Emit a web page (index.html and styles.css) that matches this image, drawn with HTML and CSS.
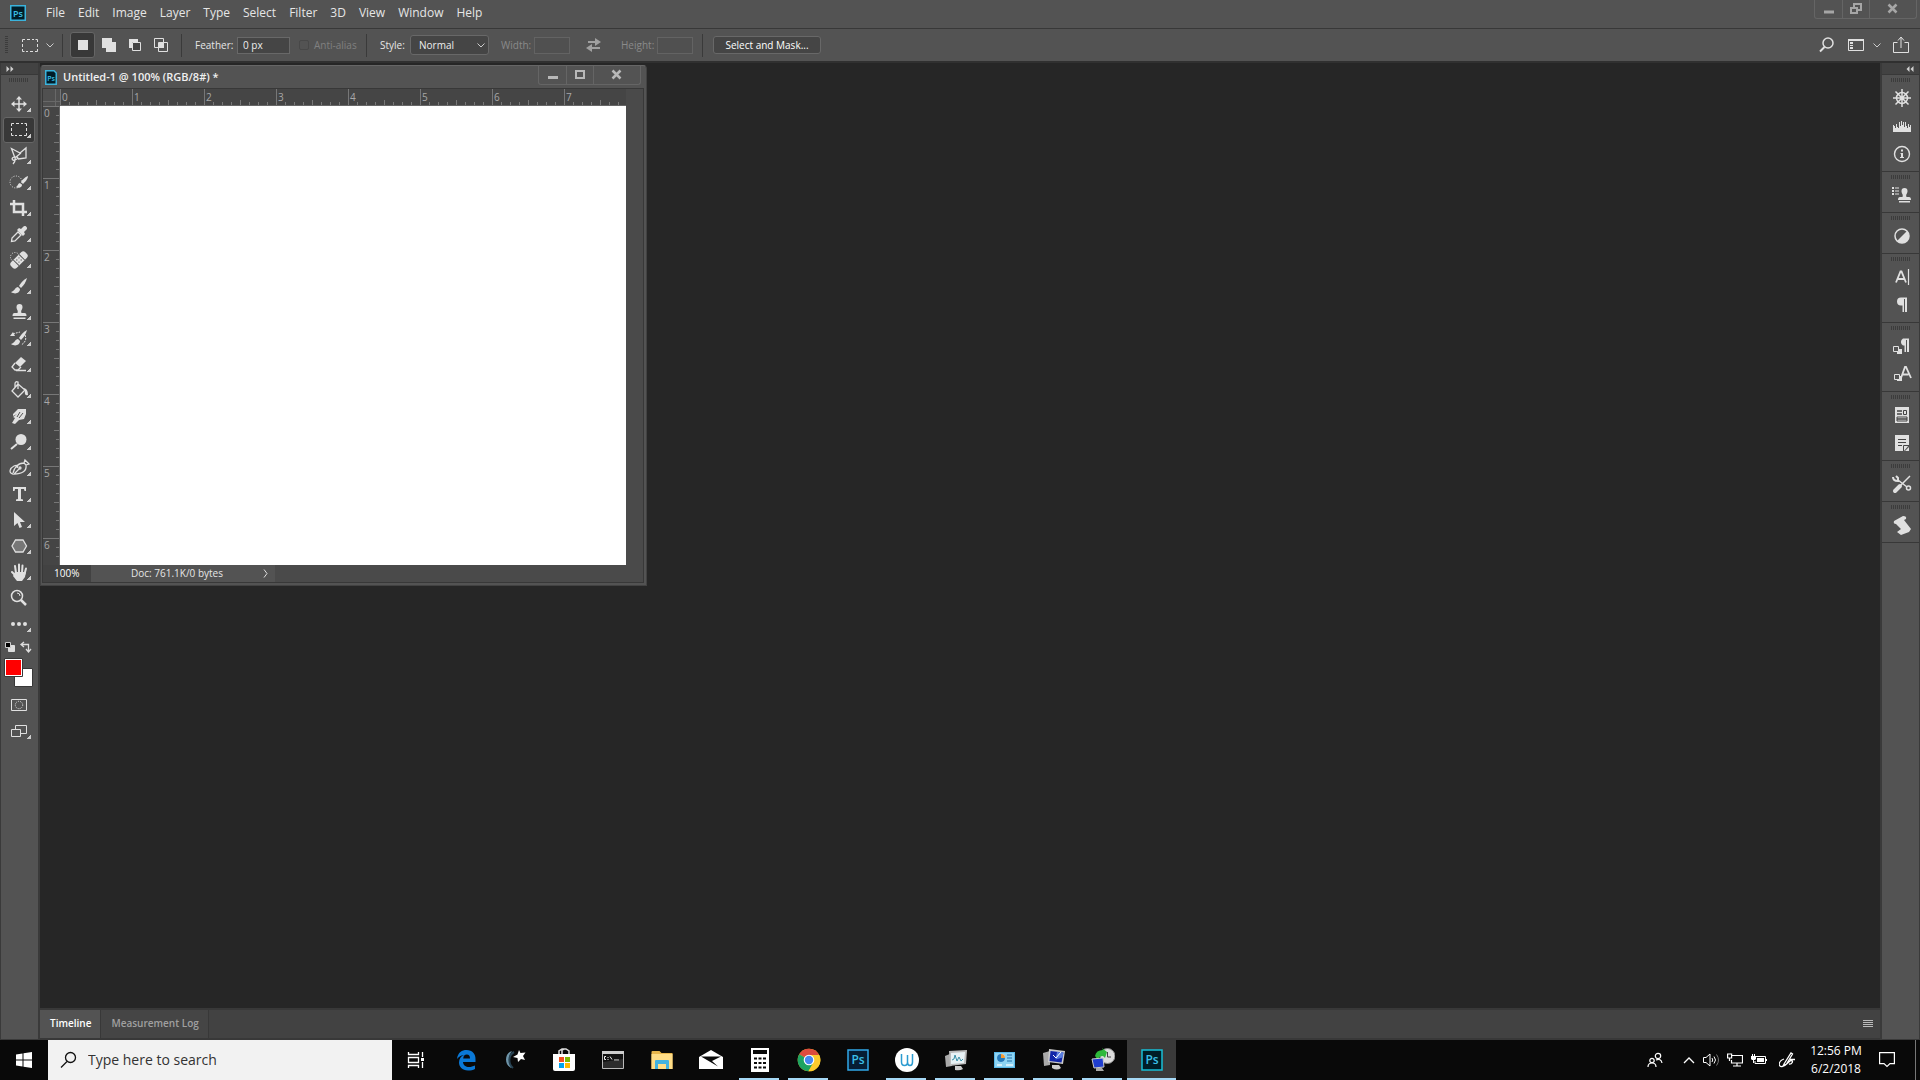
FILE: index.html
```
<!DOCTYPE html>
<html lang="en">
<head>
<meta charset="utf-8">
<title>Untitled-1 @ 100% (RGB/8#)</title>
<link rel="stylesheet" href="styles.css">
</head>
<body>
<div class="desktop">
  <header class="menubar">
    <svg class="ps-logo" width="16" height="16" viewBox="0 0 16 16"><rect x=".75" y=".75" width="14.5" height="14.5" fill="#001d29" stroke="#3bb3dc" stroke-width="1.5"/><text x="8" y="11.5" text-anchor="middle" class="ps-text ps-small">Ps</text></svg>
    <nav class="menus">
      <button>File</button><button>Edit</button><button>Image</button><button>Layer</button><button>Type</button><button>Select</button><button>Filter</button><button>3D</button><button>View</button><button>Window</button><button>Help</button>
    </nav>
    <div class="window-controls">
      <button aria-label="Minimize"><svg width="12" height="12"><path d="M1 9h10" stroke="#a6a6a6" stroke-width="3"/></svg></button>
      <button aria-label="Restore"><svg width="14" height="12" fill="none" stroke="#a6a6a6" stroke-width="2"><path d="M5 4V1h7v6H9M2 5h6v5H2z"/></svg></button>
      <button aria-label="Close"><svg width="12" height="12"><path d="M1.500 1.500l8 8M9.500 1.500l-8 8" stroke="#a6a6a6" stroke-width="2.500"/></svg></button>
    </div>
  </header>

  <div class="options">
    <span class="vgrip"></span>
    <button class="preset" aria-label="Marquee presets"><svg width="18" height="14" fill="none" stroke="#ddd"><path d="M1.500 4V1.500H4M6 1.500h3M11 1.500h2M14.500 1.500h2V4M16.500 6v3M16.500 11v2.500H14M12 13.500H9M7 13.500H5M3.500 13.500h-2V11M1.500 9V6"/></svg><svg width="8" height="5"><path d="M.5.500L4 4 7.500.500" fill="none" stroke="#ccc"/></svg></button>
    <span class="sep"></span>
    <div class="modes">
      <button class="on" aria-label="New selection"><svg width="16" height="16"><path d="M3 3h10v10H3z" fill="#e0e0e0"/></svg></button>
      <button aria-label="Add to selection"><svg width="16" height="16"><path d="M1 1h10v4h4v10H5v-4H1z" fill="#e0e0e0"/></svg></button>
      <button aria-label="Subtract from selection"><svg width="16" height="16"><path d="M2 2h9v3H5v6H2z" fill="#e0e0e0"/><path d="M5.500 5.500h8v8h-8z" fill="#424242" stroke="#e0e0e0"/></svg></button>
      <button aria-label="Intersect with selection"><svg width="16" height="16" fill="none" stroke="#e0e0e0"><path d="M1.500 1.500h9v9h-9zM5.500 5.500h9v9h-9z"/><path d="M6 6h5v5H6z" fill="#e0e0e0" stroke="none"/></svg></button>
    </div>
    <span class="sep"></span>
    <label for="feather" class="l-feather">Feather:</label><input id="feather" class="field feather" value="0 px">
    <label class="check"><input type="checkbox" disabled>Anti-alias</label>
    <span class="sep"></span>
    <label for="style" class="l-style">Style:</label><select id="style" class="style-select"><option>Normal</option><option>Fixed Ratio</option></select>
    <label for="w" class="off l-width">Width:</label><input id="w" class="field dim" disabled>
    <button class="swap" aria-label="Swap"><svg width="16" height="14"><path d="M2 4h8M6 10h8" stroke="#a0a0a0" stroke-width="2"/><path d="M9 0l6 4-6 4zM6 6L0 10l6 4z" fill="#a0a0a0"/></svg></button>
    <label for="h" class="off l-height">Height:</label><input id="h" class="field dim" disabled>
    <span class="sep end"></span>
    <button class="mask-btn">Select and Mask...</button>
    <div class="options-right">
      <button aria-label="Search"><svg width="16" height="16" fill="none" stroke="#e0e0e0"><circle cx="9" cy="6" r="5" stroke-width="1.500"/><path d="M5.500 10L1 14.500" stroke-width="2"/></svg></button>
      <button class="ws" aria-label="Workspace"><svg width="18" height="14"><path d="M1.500 1.500h15v11h-15z" fill="none" stroke="#e0e0e0"/><path d="M1 1h16v2H1zM3 4h3v2H3zM3 7h3v1H3zM3 9h3v2H3z" fill="#e0e0e0"/></svg><svg width="8" height="5"><path d="M.5.500L4 4 7.500.500" fill="none" stroke="#ccc"/></svg></button>
      <button aria-label="Share"><svg width="16" height="18" fill="none" stroke="#e0e0e0"><path d="M4.500 6.500h-4v10h15v-10h-4M8 12V1.500M5 4.500l3-3.500 3 3.500"/></svg></button>
    </div>
  </div>

  <div class="work">
    <aside class="tools">
      <div class="dock-head"><svg width="8" height="6"><path d="M.5 0L3.500 3 .5 6zM4.500 0L7.500 3l-3 3z" fill="#d0d0d0"/></svg></div>
      <span class="grip"></span>
      <button class="tool" aria-label="Move"><svg class="ic" viewBox="0 0 24 24"><path d="M12 7v10M7 12h10" stroke="#e0e0e0" stroke-width="1.500"/><path d="M12 4l3 3.500H9zM12 20l3-3.500H9zM4 12l3.500-3v6zM20 12l-3.500-3v6z" fill="#e0e0e0"/></svg></button>
      <button class="tool on" aria-label="Rectangular Marquee"><svg class="ic" viewBox="0 0 24 24" fill="none" stroke="#e0e0e0"><path d="M4.500 8V5.500H7M9 5.500h3M14 5.500h2M17.500 5.500h2V8M19.500 10v3M19.500 15v2.500H17M15 17.500h-3M10 17.500H8M6.500 17.500h-2V15M4.500 13v-3"/></svg></button>
      <button class="tool" aria-label="Polygonal Lasso"><svg class="ic" viewBox="0 0 24 24" fill="none" stroke="#e0e0e0" stroke-width="1.300"><path d="M8 14L4.500 4.500 13 9l6-5v10l-8 1M7 13c-3 1-2 4 1 3s4-3 1-3c-2 0 1 3-3 7M9 13l5-4"/></svg></button>
      <button class="tool" aria-label="Quick Selection"><svg class="ic" viewBox="0 0 24 24"><circle cx="9" cy="12" r="6" fill="none" stroke="#e0e0e0" stroke-dasharray="1 1.500"/><path d="M21 6c-3 1-6 4-7 6l2 2c2-2 5-5 5-8zM13 13c-2 0-2 3-4 4 3 2 6 0 6-2z" fill="#e0e0e0"/></svg></button>
      <button class="tool" aria-label="Crop"><svg class="ic" viewBox="0 0 24 24" fill="none" stroke="#e0e0e0" stroke-width="2.500"><path d="M3 8h13v12M7 4v12h13"/></svg></button>
      <button class="tool" aria-label="Eyedropper"><svg class="ic" viewBox="0 0 24 24"><path d="M11 10l3 3-6 6-3.500.500.500-3.500z" fill="none" stroke="#e0e0e0" stroke-width="1.300"/><path d="M10 8l2-2 2 1 2-2c2-3 6 1 3 3l-2 2 1 2-2 2z" fill="#e0e0e0"/></svg></button>
      <button class="tool" aria-label="Spot Healing Brush"><svg class="ic" viewBox="0 0 24 24"><circle cx="8" cy="9" r="4.500" fill="none" stroke="#e0e0e0" stroke-dasharray="1 1.500"/><g transform="rotate(-45 12 12)"><rect x="2" y="8" width="20" height="8" rx="3" fill="#e0e0e0"/><path d="M8 8v8M16 8v8" stroke="#535353"/><path d="M10 10h1v1h-1zM13 10h1v1h-1zM10 13h1v1h-1zM13 13h1v1h-1z" fill="#333"/></g></svg></button>
      <button class="tool" aria-label="Brush"><svg class="ic" viewBox="0 0 24 24"><path d="M20 4c-4 2-7 6-8 8l2 2c3-3 5-6 6-10zM11 13c-3 0-3 4-7 5 4 3 9 1 9-3z" fill="#e0e0e0"/></svg></button>
      <button class="tool" aria-label="Clone Stamp"><svg class="ic" viewBox="0 0 24 24"><path d="M9.500 7a3 3 0 116 0c0 3-2 3-1 6h3q2 0 2 3H5.500q0-3 2-3h3c1-3-1-3-1-6zM6.500 17.500h12V19h-12z" fill="#e0e0e0"/></svg></button>
      <button class="tool" aria-label="History Brush"><svg class="ic" viewBox="0 0 24 24"><path d="M20 4c-4 2-7 6-8 8l2 2c3-3 5-6 6-10zM11 13c-3 0-3 4-7 5 4 3 9 1 9-3zM3 10l3-4 2 4z" fill="#e0e0e0"/><path d="M6 8c2-1 4-1 7-2M18 9c2 4 0 8-4 10" fill="none" stroke="#e0e0e0" stroke-dasharray="2 1"/></svg></button>
      <button class="tool" aria-label="Eraser"><svg class="ic" viewBox="0 0 24 24"><path d="M14 5l5 4-6 6-5-4z" fill="#e0e0e0"/><path d="M8 11l-3 4 3 3h3l3-3M9 18.500h10" fill="none" stroke="#e0e0e0" stroke-width="1.300"/></svg></button>
      <button class="tool" aria-label="Paint Bucket"><svg class="ic" viewBox="0 0 24 24"><path d="M11 6l7 6-7 7-6-6zM8 10V6q0-3 3-2v7" fill="none" stroke="#e0e0e0" stroke-width="1.300"/><path d="M16 10q5 0 5 7-4 1-3-4z" fill="#e0e0e0"/></svg></button>
      <button class="tool" aria-label="Smudge"><svg class="ic" viewBox="0 0 24 24"><path d="M6 10l5-5h8v5l-2 5-5 1-4 4-3-1 3-5-2-1 4-3-4 2z" fill="#e0e0e0"/><path d="M13 8l-3 5M16 9l-4 5" stroke="#535353"/></svg></button>
      <button class="tool" aria-label="Dodge"><svg class="ic" viewBox="0 0 24 24"><circle cx="14" cy="9.500" r="5.500" fill="#e0e0e0"/><path d="M10 14l-6 5" stroke="#e0e0e0" stroke-width="2"/></svg></button>
      <button class="tool" aria-label="Pen"><svg class="ic" viewBox="0 0 24 24" fill="none" stroke="#e0e0e0" stroke-width="1.300"><path d="M6 18c-5-1-3-6 1-8 2-1 5-1 3 2M6 17c1-5 5-10 11-10l2 2c1 6-4 9-12 9l6-6M17 7l1-3 4 4-3 1"/><circle cx="13" cy="12" r="1"/></svg></button>
      <button class="tool" aria-label="Type"><svg class="ic" viewBox="0 0 24 24"><path d="M6 5h13v4h-1.500l-.5-2h-3v10l2 .5V19H9v-1.500l2-.5V7H8l-.5 2H6z" fill="#e0e0e0"/></svg></button>
      <button class="tool" aria-label="Path Selection"><svg class="ic" viewBox="0 0 24 24"><path d="M7 4v14l3.500-3 2 5 2.500-1-2-5h5z" fill="#e0e0e0"/></svg></button>
      <button class="tool" aria-label="Shape"><svg class="ic" viewBox="0 0 24 24"><path d="M8.500 6h7.500l3.500 6-3.500 6H8.500L5 12z" fill="#777" stroke="#e0e0e0" stroke-width="1.300"/></svg></button>
      <button class="tool" aria-label="Hand"><svg class="ic" viewBox="0 0 24 24" fill="none" stroke="#e0e0e0" stroke-width="2" stroke-linecap="round"><path d="M5 12l4 4M9 13l-1-7M12 13V4.500M15 13l.500-7.500M17.500 14L19 8.500"/><path d="M8 12h11l-1 5-3 4h-5l-4-5z" fill="#e0e0e0" stroke="none"/></svg></button>
      <button class="tool plain" aria-label="Zoom"><svg class="ic" viewBox="0 0 24 24" fill="none" stroke="#e0e0e0"><circle cx="10" cy="10" r="5.500" stroke-width="1.500"/><path d="M14 14l5 5" stroke-width="2.500"/><path d="M10 7q3 0 3 3"/></svg></button>
      <button class="tool" aria-label="Edit Toolbar"><svg class="ic" viewBox="0 0 24 24" fill="#e0e0e0"><circle cx="6" cy="12" r="2"/><circle cx="12" cy="12" r="2"/><circle cx="18" cy="12" r="2"/></svg></button>
      <div class="colors">
        <svg width="30" height="13"><path d="M4.500 4.500h6v6h-6z" fill="#ddd" stroke="#ddd"/><path d="M1.500 1.500h5v5h-5z" fill="#000" stroke="#ccc"/><path d="M18 3.500h6.500V10M20 1l-3 2.500L20 6M22 8l2.500 3L27 8" fill="none" stroke="#ddd" stroke-width="1.300"/></svg>
        <svg width="30" height="31"><path d="M10.500 10.500h18v18h-18z" fill="#fff" stroke="#383838"/><path d="M.5.500h18v18H.5z" fill="#fff" stroke="#383838"/><path d="M2 2h15v15H2z" fill="#f00"/></svg>
      </div>
      <button class="tool plain" aria-label="Quick Mask"><svg class="ic" viewBox="0 0 24 24" fill="none" stroke="#e0e0e0"><path d="M4.500 6.500h15v11h-15z"/><circle cx="12" cy="12" r="3.700" stroke-dasharray="1 1"/></svg></button>
      <button class="tool" aria-label="Screen Mode"><svg class="ic" viewBox="0 0 24 24" fill="none" stroke="#e0e0e0"><path d="M8.500 10V6.500h11v8h-6M4.500 10.500h9v7h-9z"/></svg></button>
    </aside>

    <main class="stage">
      <div class="canvas-area">
        <section class="doc">
          <div class="doc-title">
            <svg width="12" height="15" viewBox="0 0 12 15"><path d="M.75.750H9L11.250 3v11.250H.75z" fill="#001d29" stroke="#3bb3dc" stroke-width="1.500"/><text x="6" y="10.500" text-anchor="middle" class="ps-text ps-tiny">Ps</text></svg>
            <h1>Untitled-1 @ 100% (RGB/8#) *</h1>
            <div class="window-controls">
              <button aria-label="Minimize"><svg width="12" height="12"><path d="M1 8.500h10" stroke="#b8b8b8" stroke-width="3"/></svg></button>
              <button aria-label="Maximize"><svg width="12" height="12"><path d="M2 2h8v7H2z" fill="none" stroke="#b8b8b8" stroke-width="2"/></svg></button>
              <button aria-label="Close"><svg width="12" height="12"><path d="M1.500 1.500l8 8M9.500 1.500l-8 8" stroke="#b8b8b8" stroke-width="2.500"/></svg></button>
            </div>
          </div>
          <div class="doc-body">
            <div class="corner"></div>
            <div class="ruler-x"><span>0</span><span>1</span><span>2</span><span>3</span><span>4</span><span>5</span><span>6</span><span>7</span></div>
            <div class="scroll-y"></div>
            <div class="ruler-y"><span>0</span><span>1</span><span>2</span><span>3</span><span>4</span><span>5</span><span>6</span></div>
            <div class="paper"></div>
            <div class="status"><span class="pct">100%</span><span class="info">Doc: 761.1K/0 bytes</span><button class="more" aria-label="Status options"><svg width="5" height="9"><path d="M1 .5l3 4-3 4" fill="none" stroke="#ddd"/></svg></button></div>
          </div>
        </section>
      </div>
      <div class="panel-tabs">
        <button class="tab on">Timeline</button><button class="tab">Measurement Log</button>
        <button class="panel-menu" aria-label="Panel menu"><svg width="10" height="8"><path d="M0 .5h10M0 2.500h10M0 4.500h10M0 6.500h10" stroke="#bbb"/></svg></button>
      </div>
    </main>

    <aside class="dock">
      <div class="dock-head right"><svg width="8" height="6"><path d="M3.500 0L.5 3l3 3zM7.500 0L4.500 3l3 3z" fill="#d0d0d0"/></svg></div>
      <div class="group">
        <button aria-label="Navigator"><svg class="ic" viewBox="0 0 24 24" fill="none" stroke="#e0e0e0" stroke-width="1.500"><circle cx="12" cy="12" r="5.500"/><path d="M12 3v18M3 12h18M5.500 5.500l13 13M18.500 5.500l-13 13"/></svg></button>
        <button aria-label="Histogram"><svg class="ic" viewBox="0 0 24 24"><path d="M3 18V11h1v1h1v2h1v-4h1v3h1v1h1V8h1v4h1V7h1v4h1V8h1v5h1V8h1v4h1v2h1v-4h1v3h1v-2h1v7z" fill="#e0e0e0"/></svg></button>
        <button aria-label="Info"><svg class="ic" viewBox="0 0 24 24"><circle cx="12" cy="12" r="7.500" fill="none" stroke="#e0e0e0" stroke-width="1.400"/><path d="M11 7.500h2v2h-2zM10.500 11H13v4h1v1h-4v-1h1v-3h-.5z" fill="#e0e0e0"/></svg></button>
      </div>
      <div class="group"><button aria-label="Clone Source"><svg class="ic" viewBox="0 0 24 24" fill="#e0e0e0"><path d="M2 4h2v2H2zM5 4.500h4v1H5zM2 7h2v2H2zM5 7.500h4v1H5zM2 10h2v2H2zM5 10.500h4v1H5zM11.500 8a3 3 0 116 0c0 3-2 3-1 6h2.500q2 0 2 3H8q0-3 2-3h2.500c1-3-1-3-1-6zM9 18h11v1.500H9z"/></svg></button></div>
      <div class="group"><button aria-label="Adjustments"><svg class="ic" viewBox="0 0 24 24"><circle cx="12" cy="12" r="7" fill="none" stroke="#e0e0e0" stroke-width="1.500"/><path d="M17 7A7 7 0 017 17z" fill="#e0e0e0"/></svg></button></div>
      <div class="group">
        <button aria-label="Character"><svg class="ic" viewBox="0 0 24 24" fill="none" stroke="#e0e0e0" stroke-width="1.800"><path d="M6 17.500l4.500-11h1l4.500 11M7.500 14h7"/><path d="M18.500 4v16" stroke-width="1.200"/></svg></button>
        <button aria-label="Paragraph"><svg class="ic" viewBox="0 0 24 24"><path d="M17 4.500h-6a4 4 0 000 8h1.500V19H14V6h1v13h2z" fill="#e0e0e0"/></svg></button>
      </div>
      <div class="group">
        <button aria-label="Paragraph Styles"><svg class="ic" viewBox="0 0 24 24"><path d="M19 4.500h-6a4 4 0 000 7h1.500V18H16V6h1v12h2zM7 15h5v5H7z" fill="#e0e0e0"/><path d="M3.500 12.500h5v5h-5z" fill="#535353" stroke="#e0e0e0"/></svg></button>
        <button aria-label="Character Styles"><svg class="ic" viewBox="0 0 24 24"><path d="M11 16l4-11h1l5 11M12.500 12.500h6" fill="none" stroke="#e0e0e0" stroke-width="1.800"/><path d="M7 14h5v5H7z" fill="#e0e0e0"/><path d="M4.500 12.500h5v5h-5z" fill="#535353" stroke="#e0e0e0"/></svg></button>
      </div>
      <div class="group">
        <button aria-label="Layer Comps"><svg class="ic" viewBox="0 0 24 24"><path d="M5 4h14v16H5z" fill="#e0e0e0"/><path d="M7 8h5M7 11h5M7 16h10" stroke="#444" stroke-width="1.500"/><path d="M7 14h10v4H7zM13.500 7.500h3v4h-3z" fill="none" stroke="#444"/></svg></button>
        <button aria-label="Notes"><svg class="ic" viewBox="0 0 24 24"><path d="M5 4h14v10l-5 6H5z" fill="#e0e0e0"/><path d="M8 8.500h8M8 11.500h8M8 14.500h4M13.500 20v-5.500H19" fill="none" stroke="#444"/><path d="M19 16v4h-4z" fill="#e0e0e0"/></svg></button>
      </div>
      <div class="group"><button aria-label="Tool Presets"><svg class="ic" viewBox="0 0 24 24" fill="none" stroke="#e0e0e0" stroke-width="1.500"><path d="M20 4l-9 9M8 8l9 7"/><path d="M10 14l-5 5" stroke-width="4" stroke-linecap="round"/><path d="M3 5c0 3 2 4 5 4V6L6 4" stroke-width="2"/><circle cx="18.500" cy="16" r="2"/></svg></button></div>
      <div class="group"><button aria-label="Actions"><svg class="ic" viewBox="0 0 24 24"><path d="M4 8l9-5q4 0 3 3l-2 1 7 9-2 3-8 3-4-3 4-3-5-5q-3 0-2-3z" fill="#e0e0e0"/></svg></button></div>
    </aside>
  </div>

  <footer class="taskbar">
    <button class="start" aria-label="Start"><svg width="16" height="16"><path d="M0 2.500L6.500 1.500V7.500H0zM7.500 1.300L16 0V7.500H7.500zM0 8.500H6.500V14.500L0 13.500zM7.500 8.500H16V16L7.500 14.700z" fill="#fff"/></svg></button>
    <label class="search"><svg width="18" height="18" fill="none" stroke="#111" stroke-width="1.300"><circle cx="10.500" cy="6.500" r="5"/><path d="M7 10.500L1 16.500"/></svg><input placeholder="Type here to search" aria-label="Search"></label>
    <nav class="apps">
      <button aria-label="Task View"><svg viewBox="0 0 24 24" fill="none" stroke="#fff" stroke-width="1.300"><path d="M3.500 4v2.500h10V4M3.500 20v-2.500h10V20M3.500 9.500h10v5h-10zM17.500 4v5M17.500 14v6"/><path d="M16 10h3v3h-3z" fill="#fff" stroke="none"/></svg></button>
      <button aria-label="Edge"><svg viewBox="0 0 24 24"><path d="M3 11C4 4 8 2 12.500 2c6 0 9 4 9 9v3H9c0 3 3 5 6 5 2 0 4-.6 6-1.500V21c-2 1-4 1.500-7 1.500-6 0-9-4-9-8C5 11 7 8 10 7 8 7 5 8.500 3 11zM9.200 10.500H16C16 8 15 6.500 12.800 6.500 10.500 6.500 9.500 8 9.200 10.500z" fill="#0a78d6"/></svg></button>
      <button aria-label="Moon"><svg viewBox="0 0 24 24"><path d="M9 3C1 5 1 18 9 20 5 15 5 8 9 3z" fill="#6e94a8"/><path d="M11 4C5 7 5 16 10 20" fill="none" stroke="#284353" stroke-width="2"/><path d="M16 2l1.500 3 5-.5-2.500 3.500 2 4-4-1-3 3-.500-4-4.500-1 4.500-2.500z" fill="#fff"/></svg></button>
      <button aria-label="Store"><svg viewBox="0 0 24 24"><path d="M7 6V3l3-2h4l3 2v3M10 6V2l2-1" fill="none" stroke="#ddd" stroke-width="1.500"/><path d="M1 6h22v15q0 2-2 2H3q-2 0-2-2z" fill="#fff"/><path d="M7 9h5v5H7z" fill="#f25022"/><path d="M13 9h5v5h-5z" fill="#7fba00"/><path d="M7 15h5v5H7z" fill="#00a4ef"/><path d="M13 15h5v5h-5z" fill="#ffb900"/></svg></button>
      <button aria-label="Command Prompt"><svg viewBox="0 0 24 24"><path d="M1.500 3.500h21v17h-21z" fill="#111" stroke="#b9b9b9"/><path d="M1 3h22v3H1z" fill="#ccc"/><path d="M5 8.500H3.500v3H5M7 9v1M7 11v1M9 8.500l2 3M13 12h5" fill="none" stroke="#eee"/><path d="M2 14l20-3v9H2z" fill="#555" opacity=".4"/></svg></button>
      <button aria-label="File Explorer"><svg viewBox="0 0 24 24"><path d="M1.500 4q0-1 1-1h7l2 2h11v16h-21z" fill="#e8b64c"/><path d="M1.500 6h21v15h-21z" fill="#ffdd87"/><path d="M5 21v-8q0-1 1-1h12q1 0 1 1v8h-3v-5H8v5z" fill="#42b3e0"/></svg></button>
      <button aria-label="Mail"><svg viewBox="0 0 24 24"><path d="M0 9l12-7 12 7v12H0z" fill="#fff"/><path d="M2 8.500h20l-9 4.500 6 5.500z" fill="#0a0a0a"/></svg></button>
      <button class="run" aria-label="Calculator"><svg viewBox="0 0 24 24"><path d="M3 0h18v24H3z" fill="#fff"/><path d="M5 2h14v4H5z" fill="#090909"/><path d="M6 10.500h13M6 15h13M6 19.500h13" stroke="#090909" stroke-width="2" stroke-dasharray="3 1.500"/></svg></button>
      <button class="run" aria-label="Chrome"><svg viewBox="0 0 24 24"><circle cx="12" cy="12" r="11.300" fill="#f8c51b"/><path d="M12 12L2.200 6.300a11.300 11.300 0 0119.600.2z" fill="#dd4b3e"/><path d="M12 12l-9.800-5.700A11.300 11.300 0 0011.500 23.300L16 15z" fill="#1da362"/><path d="M12 7h10.300a11.300 11.300 0 01-10.800 16.300L17 14z" fill="#fcca2c"/><circle cx="12" cy="12" r="5.300" fill="#fff"/><circle cx="12" cy="12" r="4.200" fill="#4688f1"/></svg></button>
      <button aria-label="Photoshop CC"><svg viewBox="0 0 24 24"><path d="M2 2h20v20H2z" fill="#061e34" stroke="#31a8e8" stroke-width="1.500"/><text x="12" y="16" text-anchor="middle" class="ps-text ps-big">Ps</text></svg></button>
      <button class="run" aria-label="W app"><svg viewBox="0 0 24 24"><circle cx="12" cy="12" r="12" fill="#fff"/><path d="M6.500 6v8q0 3.500 3 3.500t3-3.500V7M12.500 14q0 3.500 2.500 3.500t2.500-3.500V6" fill="none" stroke="#2b9bd0" stroke-width="1.500"/></svg></button>
      <button class="run" aria-label="Resource Monitor"><svg viewBox="0 0 24 24"><path d="M1 8l7-3v13l-6 1z" fill="#aaa"/><path d="M5 3l18-1-1 14-16 2z" fill="#bbb"/><path d="M7 5l14-1-1 11-13 1z" fill="#e8f2f5"/><path d="M8 12l2-1 1-4 2 6 2-4 2 4 2-2" fill="none" stroke="#3990a8"/><path d="M11 18h6l2 3q-3 2-8 1z" fill="#ccc"/></svg></button>
      <button class="run" aria-label="Control Panel"><svg viewBox="0 0 24 24"><path d="M1 4h21v16H1z" fill="#5ab9ea"/><path d="M2 5h19v14H2z" fill="#8dd4f4"/><circle cx="8" cy="10" r="4" fill="#fff"/><path d="M8 10V6a4 4 0 014 4z" fill="#f29c38"/><path d="M8 10h4a4 4 0 11-4-4z" fill="#247abb"/><path d="M14 7h5M14 10h5M14 13h5" stroke="#226fa8"/><path d="M4 17h5M13 17h7" stroke="#e8f6fc" stroke-width="1.500"/></svg></button>
      <button class="run" aria-label="Remote Desktop"><svg viewBox="0 0 24 24"><path d="M1 5l7-2v14l-6 1z" fill="#aaa"/><path d="M7 1l16 2-2 13-15-2z" fill="#ccc"/><path d="M8.500 3l13 1.500-2 10-12-1.500z" fill="#1226a8"/><path d="M15 4l6.500.500-1 5-7 2z" fill="#5a7ee0"/><path d="M11 7l3 3 5-6" fill="none" stroke="#fff"/><path d="M10 17h7l2 3q-4 3-9 0z" fill="#ccc"/></svg></button>
      <button class="run" aria-label="Time Sync"><svg viewBox="0 0 24 24"><circle cx="16.500" cy="8" r="7.500" fill="#ddd" stroke="#888"/><path d="M16.500 4v5H20" fill="none" stroke="#444"/><path d="M4 8q1-6 8-6l-1-2 5 4-2 6-2-2q-4 0-5 4z" fill="#2fb93b"/><path d="M1 11l11-1 1 9-10 1z" fill="#203ed0" stroke="#ccc"/><path d="M5 20h6l2 3H5z" fill="#aaa"/></svg></button>
      <button class="run active" aria-label="Photoshop"><svg viewBox="0 0 24 24"><path d="M2 2h20v20H2z" fill="#001d26" stroke="#17bfd6" stroke-width="1.500"/><text x="12" y="16" text-anchor="middle" class="ps-text ps-big">Ps</text></svg></button>
    </nav>
    <div class="tray">
      <button class="people" aria-label="People"><svg width="16" height="16" fill="none" stroke="#fff" stroke-width="1.200"><circle cx="11" cy="4" r="2.700"/><circle cx="5" cy="8.500" r="2.200"/><path d="M1 15q0-4 4-4t4 4M9 8q5-2 6 3"/></svg></button>
      <button aria-label="Show hidden icons"><svg width="12" height="8"><path d="M1 7l5-5 5 5" fill="none" stroke="#fff" stroke-width="1.300"/></svg></button>
      <button aria-label="Volume"><svg width="16" height="14" fill="none" stroke="#fff"><path d="M.5 4.500H3l4-3.500v12L3 9.500H.5zM9 5q1.500 2 0 4M11 3.500q3 3.500 0 7"/><path d="M13.500 1.500q4 5.500 0 11" stroke="#777"/></svg></button>
      <button aria-label="Network"><svg width="16" height="14" fill="none" stroke="#fff" stroke-width="1.200"><path d="M5 2.500h10.500v7.500h-11V7M10 10v3M6 13h8M.6 1h4v4h-4zM2.500 5v3"/></svg></button>
      <button aria-label="Battery"><svg width="16" height="14"><path d="M5 3.500h9.500v7H4V8" fill="none" stroke="#fff"/><path d="M6 5h7v4H6zM15 6h1v2h-1zM0 3h5v3L4 7H1L0 6zM1 1h1v2H1zM3 1h1v2H3zM2 7h1v3H2z" fill="#fff"/></svg></button>
      <button class="ink" aria-label="Windows Ink"><svg width="16" height="16" fill="none" stroke="#fff" stroke-width="1.300"><path d="M5 12l7-11 1.500 1-6 10-3 1.500zM5 7C-1 9-1 15 3 14.500c5-1 7-6 9-6 3 0 1 4-2 3.500M11 7.500h5"/></svg></button>
      <time class="clock">12:56 PM<br>6/2/2018</time>
      <button class="notes" aria-label="Action Center"><svg width="16" height="16"><path d="M.6.600h14.800v11H11L8 14.500 5 11.600H.6z" fill="none" stroke="#fff" stroke-width="1.200"/></svg></button>
      <span class="peek"></span>
    </div>
  </footer>
</div>
</body>
</html>
```
FILE: styles.css
```
* { box-sizing: border-box; }
body { margin: 0; background: #262626; color: #e6e6e6; font: 11px/14px "Open Sans", "Noto Sans", sans-serif; }
button { margin: 0; padding: 0; border: 0; background: none; color: inherit; font: inherit; display: flex; align-items: center; justify-content: center; }
svg { display: block; flex: none; }
.desktop { min-height: 100vh; display: grid; grid-template-rows: 29px 34px 1fr 40px; }
.ps-text { font-family: "Open Sans", sans-serif; font-weight: 600; fill: #3bc0e8; }
.ps-small { font-size: 9px; }
.ps-tiny { font-size: 7px; }
.ps-big { font-size: 12px; }

.menubar { display: flex; align-items: center; background: #535353; border-bottom: 1px solid #383838; padding: 0 3px 3px 10px; font-size: 12px; }
.menus { display: flex; align-items: center; gap: 13px; margin-left: 20px; }
.window-controls { display: flex; align-self: flex-start; margin-left: auto; border: 1px solid #656565; border-top: 0; border-radius: 0 0 3px 3px; height: 19px; }
.window-controls button { width: 27px; }
.window-controls button + button { border-left: 1px solid #656565; }
.window-controls button:last-child { width: 47px; }

.options { display: flex; align-items: center; background: #535353; border-bottom: 2px solid #303030; padding: 0 11px 0 5px; font-size: 10px; white-space: nowrap; }
.vgrip { width: 3px; height: 18px; background: repeating-linear-gradient(#3c3c3c 0 1px, transparent 1px 2px); }
.preset { gap: 7px; margin-left: 13px; }
.sep { width: 1px; height: 23px; background: #3a3a3a; margin: 0 13px 0 12px; }
.preset + .sep { margin: 0 7px 0 8px; }
.modes { display: flex; gap: 1px; }
.modes button { width: 25px; height: 26px; }
.modes button.on { background: #383838; border: 1px solid #666; border-radius: 3px; }
.modes + .sep { margin-left: 8px; }
.field { height: 17px; padding: 0 5px; border: 1px solid #686868; background: #454545; color: #eee; font: inherit; }
.feather { width: 53px; margin-left: 6px; }
.check { display: flex; align-items: center; gap: 5px; width: 55px; margin-left: 9px; color: #808080; }
.check input { appearance: none; flex: none; width: 10px; height: 10px; margin: 0; border: 1px solid #484848; border-radius: 2px; }
.l-feather { width: 36px; }
.l-style { width: 24px; }
.style-select { appearance: none; width: 79px; height: 20px; margin-left: 6px; padding: 0 8px; border: 1px solid #686868; border-radius: 3px; color: #eee; font: inherit; background: #454545 url("data:image/svg+xml,%3Csvg xmlns='http://www.w3.org/2000/svg' width='8' height='5'%3E%3Cpath d='M.5.500L4 4 7.500.500' fill='none' stroke='%23ccc'/%3E%3C/svg%3E") no-repeat right 3px center; }
.off { color: #8a8a8a; }
.l-width { width: 29px; margin-left: 12px; }
.l-height { width: 32px; }
.dim { width: 36px; margin-left: 4px; background: #505050; border-color: #636363; }
.swap { margin: 0 19px 0 16px; }
.sep.end { margin: 0 10px 0 9px; }
.mask-btn { width: 108px; height: 18px; border: 1px solid #686868; border-radius: 3px; background: #454545; color: #fff; }
.options-right { display: flex; align-items: center; gap: 12px; margin-left: auto; }
.ws { gap: 8px; }

.work { display: grid; grid-template-columns: 40px 1fr 40px; min-height: 0; }
.tools, .dock { background: #535353; border: solid #3a3a3a; border-width: 0 2px 1px 1px; }
.tools { display: flex; flex-direction: column; align-items: flex-start; padding-left: 2px; }
.dock { border-left-width: 2px; border-right-width: 1px; }
.dock-head { align-self: stretch; height: 12px; background: #424242; border-bottom: 1px solid #383838; display: flex; align-items: center; padding: 0 5px; }
.tools .dock-head { margin-left: -2px; }
.dock-head.right { justify-content: flex-end; }
.grip { width: 20px; height: 4px; margin: 3px 0 9px 6px; background: repeating-linear-gradient(90deg, #3c3c3c 0 1px, transparent 1px 2px); }
.ic { width: 24px; height: 24px; }
.tool { width: 32px; height: 26px; border: 1px solid transparent; border-radius: 3px; background: linear-gradient(135deg, transparent 50%, #ccc 50%) no-repeat right 3px bottom 4px / 4px 4px; }
.tool.on { background-color: #383838; border-color: #666; }
.tool.plain { background: none; }
.colors { width: 32px; height: 55px; padding: 4px 0 0 1px; display: flex; flex-direction: column; gap: 4px; }

.stage { display: grid; grid-template-rows: 1fr 32px; min-width: 0; }
.canvas-area { background: #262626; padding-top: 2px; }
.doc { width: fit-content; background: #535353; border: 1px solid #424242; border-top-color: #666; border-radius: 4px 4px 0 0; padding: 0 2px 2px 1px; }
.doc-title { height: 22px; display: flex; align-items: center; gap: 6px; padding: 0 3px; }
.doc-title h1 { margin: 0; font-size: 11px; font-weight: 600; color: #f0f0f0; }
.doc-body { display: grid; grid-template-columns: 17px 566px 17px; grid-template-rows: 17px 459px 17px; border: 1px solid #383838; background: #4a4a4a; }
.corner { background: linear-gradient(#686868, #686868) no-repeat 0 12px / 100% 1px, linear-gradient(#686868, #686868) no-repeat 12px 0 / 1px 100%, #505050; }
.ruler-x, .ruler-y { overflow: hidden; display: flex; font-size: 10px; line-height: 12px; color: #a8a8a8; background-color: #454545; }
.ruler-x { border-bottom: 1px solid #666; background-image: repeating-linear-gradient(90deg, #777 0 1px, transparent 1px 72px), repeating-linear-gradient(90deg, #777 0 1px, transparent 1px 36px), repeating-linear-gradient(90deg, #777 0 1px, transparent 1px 9px); background-size: 100% 16px, 100% 5px, 100% 3px; background-position: 0 0, 0 100%, 0 100%; background-repeat: no-repeat; }
.ruler-x span { flex: 0 0 72px; padding: 2px 0 0 2px; }
.ruler-y { flex-direction: column; border-right: 1px solid #666; background-image: repeating-linear-gradient(#777 0 1px, transparent 1px 72px), repeating-linear-gradient(#777 0 1px, transparent 1px 36px), repeating-linear-gradient(#777 0 1px, transparent 1px 9px); background-size: 16px 100%, 5px 100%, 3px 100%; background-position: 0 0, 100% 0, 100% 0; background-repeat: no-repeat; }
.ruler-y span { flex: 0 0 72px; padding: 1px 0 0 1px; }
.scroll-y { grid-column: 3; grid-row: 1 / 3; background: #4a4a4a; }
.paper { background: #fff; }
.status { grid-column: 1 / 4; display: flex; align-items: center; background: #4a4a4a; font-size: 10px; }
.pct { align-self: stretch; width: 48px; padding-left: 11px; background: #424242; line-height: 16px; color: #fff; }
.info { align-self: stretch; width: 165px; padding-left: 40px; background: #535353; line-height: 16px; }
.more { align-self: stretch; width: 19px; background: #535353; }

.panel-tabs { display: flex; background: #424242; border: solid #383838; border-width: 2px 0 2px; font-weight: 600; font-size: 10px; }
.tab { padding: 0 9px 2px 10px; color: #a0a0a0; border-right: 1px solid #383838; background: #454545; }
.tab.on { color: #fff; background: #535353; }
.panel-menu { margin-left: auto; padding-right: 7px; }

.group { padding: 9px 0 3px; border-bottom: 1px solid #383838; background: repeating-linear-gradient(90deg, #3c3c3c 0 1px, transparent 1px 2px) no-repeat 9px 3px / 20px 4px; }
.group button { width: 100%; height: 28px; padding-left: 2px; }

.taskbar { display: flex; background: #090909; color: #fff; }
.start { width: 48px; }
.search { width: 344px; display: flex; align-items: center; gap: 10px; padding-left: 12px; background: #f2f2f2; }
.search input { flex: 1; min-width: 0; padding: 0; border: 0; background: none; font: 14px/20px "Open Sans", sans-serif; color: #333; outline: 0; }
.search input::placeholder { color: #333; opacity: 1; }
.apps { display: flex; }
.apps button { width: 49px; border-bottom: 2px solid transparent; padding-top: 1px; }
.apps svg { width: 24px; height: 24px; }
.apps .run { background: linear-gradient(#a5d8f5, #a5d8f5) no-repeat 4px 100% / 40px 2px; background-origin: border-box; background-clip: border-box; }
.apps .active { background: linear-gradient(#a5d8f5, #a5d8f5) no-repeat 0 100% / 100% 2px #3a3a3a; background-origin: border-box; }
.tray { display: flex; align-items: center; gap: 8px; margin-left: auto; }
.people { margin-right: 12px; }
.ink { margin-left: 4px; }
.clock { width: 66px; font-size: 12px; line-height: 18px; text-align: center; white-space: nowrap; }
.notes { margin-left: 2px; }
.peek { width: 5px; height: 40px; border-left: 1px solid #777; margin-left: 12px; }
```
